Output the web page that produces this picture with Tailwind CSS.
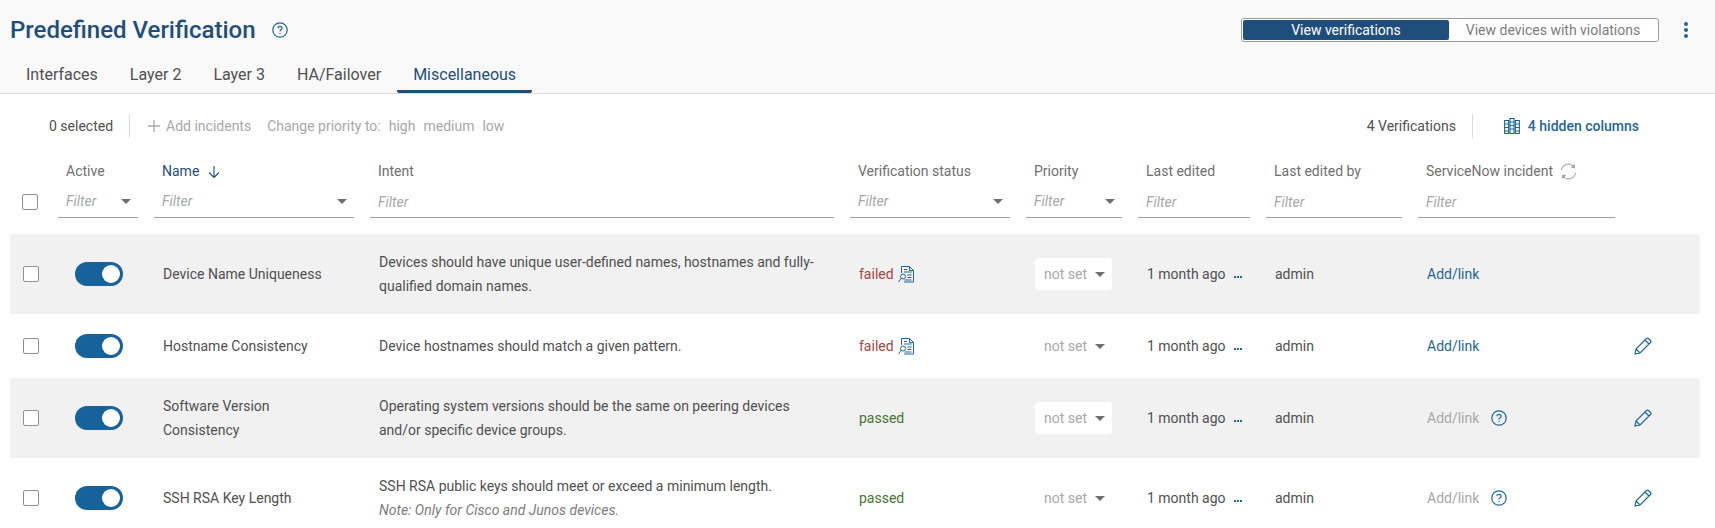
<!DOCTYPE html>
<html lang="en">

<head>
  <meta charset="UTF-8">
  <title>Predefined Verification</title>
  <script src="https://cdn.jsdelivr.net/npm/@tailwindcss/browser@4"></script>
</head>

<body class="w-[1715px] h-[528px] overflow-hidden bg-white font-['Roboto',sans-serif] text-[14px] text-[#505050]">
  <!-- page header + tabs -->
  <div class="h-[94px] bg-[#f9f9f9] border-b border-[#dcdcdc] flex flex-col">
    <div class="h-[60px] flex items-center pl-[10px] pr-[27px]">
      <h1 class="text-[24px] font-medium text-[#1f4e7d] leading-none">Predefined Verification</h1>
      <svg class="ml-[16px] w-[16px] h-[16px] text-[#1f6697]" viewBox="0 0 16 16" fill="none" stroke="currentColor">
        <circle cx="8" cy="8" r="7.2" stroke-width="1.2" />
        <path d="M5.9 6.3c0-1.2.9-2 2.1-2s2.1.8 2.1 1.9c0 1.6-2.1 1.6-2.1 3.2" stroke-width="1.2" />
        <circle cx="8" cy="11.4" r=".7" fill="currentColor" stroke="none" />
      </svg>
      <div class="ml-auto flex items-center">
        <div class="w-[418px] h-[24px] border border-[#9a9a9a] rounded-[3px] bg-white p-[1px] flex text-[14px]">
          <div class="w-[206px] bg-[#1f4e7d] text-white rounded-[2px] flex items-center justify-center">View verifications</div>
          <div class="flex-1 text-[#7c7c7c] flex items-center justify-center">View devices with violations</div>
        </div>
        <div class="ml-[25px] w-[4px] flex flex-col gap-[2px]">
          <span class="w-[4px] h-[4px] rounded-full bg-[#1f6697]"></span>
          <span class="w-[4px] h-[4px] rounded-full bg-[#1f6697]"></span>
          <span class="w-[4px] h-[4px] rounded-full bg-[#1f6697]"></span>
        </div>
      </div>
    </div>
    <div class="flex h-[33px] pl-[10px] text-[16px]">
      <div class="px-[16px] pt-[3px]">Interfaces</div>
      <div class="px-[16px] pt-[3px]">Layer 2</div>
      <div class="px-[16px] pt-[3px]">Layer 3</div>
      <div class="px-[16px] pt-[3px]">HA/Failover</div>
      <div class="px-[16px] pt-[3px] text-[#1f4e7d] border-b-[3px] border-[#1f4e7d] rounded-b-[2px]">Miscellaneous</div>
    </div>
  </div>

  <!-- toolbar -->
  <div class="h-[64px] flex items-center pl-[49px] pr-[76px]">
    <span>0 selected</span>
    <span class="w-px h-[24px] bg-[#dcdcdc] ml-[16px]"></span>
    <svg class="ml-[18px] w-[12px] h-[12px] text-[#a8a8a8]" viewBox="0 0 12 12" stroke="currentColor" stroke-width="1.3">
      <path d="M6 0v12M0 6h12" />
    </svg>
    <span class="ml-[6px] text-[#a8a8a8]">Add incidents</span>
    <span class="ml-[16px] text-[#a8a8a8]">Change priority to:</span>
    <span class="ml-[8px] text-[#a8a8a8]">high</span>
    <span class="ml-[8px] text-[#a8a8a8]">medium</span>
    <span class="ml-[8px] text-[#a8a8a8]">low</span>
    <span class="ml-auto">4 Verifications</span>
    <span class="w-px h-[24px] bg-[#dcdcdc] ml-[16px]"></span>
    <svg class="ml-[31px] w-[16px] h-[16px] text-[#1f6697]" viewBox="0 0 16 16" fill="none" stroke="currentColor" stroke-width="1.1">
      <path d="M.6 2.500h4v13h-4zM6 .5h4v15H6zM11.400 2.500h4v13h-4zM.6 6h4M.6 9.500h4M.6 13h4M6 4h4M6 7.500h4M6 11h4M11.400 6h4M11.400 9.500h4M11.400 13h4" />
    </svg>
    <span class="ml-[8px] font-medium text-[#1f6697]">4 hidden columns</span>
  </div>

  <!-- column headers -->
  <div class="grid grid-cols-[20px_80px_200px_464px_160px_96px_112px_136px_197px_1fr] gap-x-4 ml-[10px] pl-[12px] w-[1690px] mt-[3px]">
    <div></div>
    <div class="pl-[8px] text-[#6f6f6f]">Active</div>
    <div class="pl-[8px] flex items-center text-[#1f4e7d]">Name
      <svg class="ml-[9px] w-[12px] h-[12px]" viewBox="0 0 12 12" fill="none" stroke="currentColor" stroke-width="1.1">
        <path d="M6 0v11M1 6.500l5 5 5-5" />
      </svg>
    </div>
    <div class="pl-[8px] text-[#6f6f6f]">Intent</div>
    <div class="pl-[8px] text-[#6f6f6f]">Verification status</div>
    <div class="pl-[8px] text-[#6f6f6f]">Priority</div>
    <div class="pl-[8px] text-[#6f6f6f]">Last edited</div>
    <div class="pl-[8px] text-[#6f6f6f]">Last edited by</div>
    <div class="pl-[8px] flex items-center text-[#6f6f6f]">ServiceNow incident
      <svg class="ml-[7px] w-[17px] h-[17px] text-[#9a9a9a]" viewBox="0 0 17 17" fill="none" stroke="currentColor">
        <path d="M1.200 7A7.400 7.400 0 0 1 13.800 3.300M15.800 10A7.400 7.400 0 0 1 3.200 13.700" />
        <path d="M14.600 1.500v3.200h-3.200z" fill="currentColor" stroke-width=".6" />
        <path d="M2.400 15.500v-3.200h3.200z" fill="currentColor" stroke-width=".6" />
      </svg>
    </div>
    <div></div>
  </div>

  <!-- filters -->
  <div class="grid grid-cols-[20px_80px_200px_464px_160px_96px_112px_136px_197px_1fr] gap-x-4 ml-[10px] pl-[12px] w-[1690px] h-[32px] mt-[4px] items-end">
    <div class="self-center w-[16px] h-[16px] border border-[#8f8f8f] rounded-[2px] bg-white"></div>
    <div class="h-[32px] border-b border-[#a0a0a0] pl-[8px] pr-[7px] flex items-center justify-between italic text-[#a8a8a8]">Filter
      <span class="w-0 h-0 border-x-[5px] border-x-transparent border-t-[5px] border-t-[#6f6f6f]"></span>
    </div>
    <div class="h-[32px] border-b border-[#a0a0a0] pl-[8px] pr-[7px] flex items-center justify-between italic text-[#a8a8a8]">Filter
      <span class="w-0 h-0 border-x-[5px] border-x-transparent border-t-[5px] border-t-[#6f6f6f]"></span>
    </div>
    <div class="h-[32px] border-b border-[#a0a0a0] pl-[8px] pt-[1px] flex items-center italic text-[#a8a8a8]">Filter</div>
    <div class="h-[32px] border-b border-[#a0a0a0] pl-[8px] pr-[7px] flex items-center justify-between italic text-[#a8a8a8]">Filter
      <span class="w-0 h-0 border-x-[5px] border-x-transparent border-t-[5px] border-t-[#6f6f6f]"></span>
    </div>
    <div class="h-[32px] border-b border-[#a0a0a0] pl-[8px] pr-[7px] flex items-center justify-between italic text-[#a8a8a8]">Filter
      <span class="w-0 h-0 border-x-[5px] border-x-transparent border-t-[5px] border-t-[#6f6f6f]"></span>
    </div>
    <div class="h-[32px] border-b border-[#a0a0a0] pl-[8px] pt-[1px] flex items-center italic text-[#a8a8a8]">Filter</div>
    <div class="h-[32px] border-b border-[#a0a0a0] pl-[8px] pt-[1px] flex items-center italic text-[#a8a8a8]">Filter</div>
    <div class="h-[32px] border-b border-[#a0a0a0] pl-[8px] pt-[1px] flex items-center italic text-[#a8a8a8]">Filter</div>
    <div></div>
  </div>

  <!-- rows -->
  <div class="mt-[16px] ml-[10px] w-[1690px]">
    <div class="h-[80px] bg-[#f1f1f1] rounded-[3px] grid grid-cols-[20px_80px_200px_464px_160px_96px_112px_136px_197px_1fr] gap-x-4 pl-[12px] items-center">
      <div class="ml-[1px] w-[16px] h-[16px] border border-[#8f8f8f] rounded-[2px] bg-white"></div>
      <div class="pl-[17px]"><div class="w-[48px] h-[24px] rounded-full bg-[#17629a] flex items-center justify-end pr-[3px]"><span class="w-[18px] h-[18px] rounded-full bg-white"></span></div></div>
      <div class="pl-[9px]">Device Name Uniqueness</div>
      <div class="pl-[9px] leading-[24px] pr-[10px]">Devices should have unique user-defined names, hostnames and fully-qualified domain names.</div>
      <div class="pl-[9px] flex items-center text-[#a94442]">failed
        <svg class="ml-[4px] w-[17px] h-[17px] text-[#1f6697]" viewBox="0 0 17 17" fill="none" stroke="currentColor">
          <path d="M3.500 7V.5h8l4 4v11.500H6M11.500.5v4h4M6 3.500h3M6 6h7.500M9.500 9h4M9.500 11.500h4M6.500 14h7" />
          <circle cx="5" cy="10.500" r="2.500" /><path d="M3.200 12.300.5 16" />
        </svg>
      </div>
      <div class="pl-[9px]"><div class="w-[77px] h-[32px] bg-white rounded-[3px] flex items-center pl-[9px] text-[#a8a8a8]">not set<span class="ml-[8px] w-0 h-0 border-x-[5px] border-x-transparent border-t-[5px] border-t-[#6f6f6f]"></span></div></div>
      <div class="pl-[9px] flex items-center whitespace-nowrap">1 month ago<span class="ml-[8px] flex gap-[1px] mt-[6px]"><span class="w-[2px] h-[2px] bg-[#1f6697]"></span><span class="w-[2px] h-[2px] bg-[#1f6697]"></span><span class="w-[2px] h-[2px] bg-[#1f6697]"></span></span></div>
      <div class="pl-[9px]">admin</div>
      <div class="pl-[9px] text-[#1f6697]">Add/link</div>
      <div></div>
    </div>
    <div class="h-[64px] grid grid-cols-[20px_80px_200px_464px_160px_96px_112px_136px_197px_1fr] gap-x-4 pl-[12px] items-center">
      <div class="ml-[1px] w-[16px] h-[16px] border border-[#8f8f8f] rounded-[2px] bg-white"></div>
      <div class="pl-[17px]"><div class="w-[48px] h-[24px] rounded-full bg-[#17629a] flex items-center justify-end pr-[3px]"><span class="w-[18px] h-[18px] rounded-full bg-white"></span></div></div>
      <div class="pl-[9px]">Hostname Consistency</div>
      <div class="pl-[9px] leading-[24px] pr-[10px]">Device hostnames should match a given pattern.</div>
      <div class="pl-[9px] flex items-center text-[#a94442]">failed
        <svg class="ml-[4px] w-[17px] h-[17px] text-[#1f6697]" viewBox="0 0 17 17" fill="none" stroke="currentColor">
          <path d="M3.500 7V.5h8l4 4v11.500H6M11.500.5v4h4M6 3.500h3M6 6h7.500M9.500 9h4M9.500 11.500h4M6.500 14h7" />
          <circle cx="5" cy="10.500" r="2.500" /><path d="M3.200 12.300.5 16" />
        </svg>
      </div>
      <div class="pl-[9px]"><div class="w-[77px] h-[32px] rounded-[3px] flex items-center pl-[9px] text-[#a8a8a8]">not set<span class="ml-[8px] w-0 h-0 border-x-[5px] border-x-transparent border-t-[5px] border-t-[#6f6f6f]"></span></div></div>
      <div class="pl-[9px] flex items-center whitespace-nowrap">1 month ago<span class="ml-[8px] flex gap-[1px] mt-[6px]"><span class="w-[2px] h-[2px] bg-[#1f6697]"></span><span class="w-[2px] h-[2px] bg-[#1f6697]"></span><span class="w-[2px] h-[2px] bg-[#1f6697]"></span></span></div>
      <div class="pl-[9px]">admin</div>
      <div class="pl-[9px] text-[#1f6697]">Add/link</div>
      <svg class="ml-[3px] w-[18px] h-[18px] text-[#1f6697]" viewBox="0 0 18 18" fill="none" stroke="currentColor" stroke-width="1.2">
        <path d="M1 17l1-5L12.500 1.500a1.500 1.500 0 0 1 2 0l2 2a1.500 1.500 0 0 1 0 2L6 16zM2.500 12.500l3 3M11 3l4 4" />
      </svg>
    </div>
    <div class="h-[80px] bg-[#f1f1f1] rounded-[3px] grid grid-cols-[20px_80px_200px_464px_160px_96px_112px_136px_197px_1fr] gap-x-4 pl-[12px] items-center">
      <div class="ml-[1px] w-[16px] h-[16px] border border-[#8f8f8f] rounded-[2px] bg-white"></div>
      <div class="pl-[17px]"><div class="w-[48px] h-[24px] rounded-full bg-[#17629a] flex items-center justify-end pr-[3px]"><span class="w-[18px] h-[18px] rounded-full bg-white"></span></div></div>
      <div class="pl-[9px] pr-[60px] leading-[24px]">Software Version Consistency</div>
      <div class="pl-[9px] leading-[24px] pr-[10px]">Operating system versions should be the same on peering devices and/or specific device groups.</div>
      <div class="pl-[9px] text-[#47752f]">passed</div>
      <div class="pl-[9px]"><div class="w-[77px] h-[32px] bg-white rounded-[3px] flex items-center pl-[9px] text-[#a8a8a8]">not set<span class="ml-[8px] w-0 h-0 border-x-[5px] border-x-transparent border-t-[5px] border-t-[#6f6f6f]"></span></div></div>
      <div class="pl-[9px] flex items-center whitespace-nowrap">1 month ago<span class="ml-[8px] flex gap-[1px] mt-[6px]"><span class="w-[2px] h-[2px] bg-[#1f6697]"></span><span class="w-[2px] h-[2px] bg-[#1f6697]"></span><span class="w-[2px] h-[2px] bg-[#1f6697]"></span></span></div>
      <div class="pl-[9px]">admin</div>
      <div class="pl-[9px] flex items-center text-[#a8a8a8]">Add/link
        <svg class="ml-[12px] w-[16px] h-[16px] text-[#1f6697]" viewBox="0 0 16 16" fill="none" stroke="currentColor">
          <circle cx="8" cy="8" r="7.200" stroke-width="1.200" />
          <path d="M5.900 6.300c0-1.200.9-2 2.100-2s2.100.8 2.100 1.900c0 1.600-2.100 1.600-2.100 3.200" stroke-width="1.200" />
          <circle cx="8" cy="11.400" r=".7" fill="currentColor" stroke="none" />
        </svg>
      </div>
      <svg class="ml-[3px] w-[18px] h-[18px] text-[#1f6697]" viewBox="0 0 18 18" fill="none" stroke="currentColor" stroke-width="1.2">
        <path d="M1 17l1-5L12.500 1.500a1.500 1.500 0 0 1 2 0l2 2a1.500 1.500 0 0 1 0 2L6 16zM2.500 12.500l3 3M11 3l4 4" />
      </svg>
    </div>
    <div class="h-[80px] grid grid-cols-[20px_80px_200px_464px_160px_96px_112px_136px_197px_1fr] gap-x-4 pl-[12px] items-center">
      <div class="ml-[1px] w-[16px] h-[16px] border border-[#8f8f8f] rounded-[2px] bg-white"></div>
      <div class="pl-[17px]"><div class="w-[48px] h-[24px] rounded-full bg-[#17629a] flex items-center justify-end pr-[3px]"><span class="w-[18px] h-[18px] rounded-full bg-white"></span></div></div>
      <div class="pl-[9px]">SSH RSA Key Length</div>
      <div class="pl-[9px] leading-[24px] pr-[10px]">SSH RSA public keys should meet or exceed a minimum length.<div class="italic text-[#7c7c7c]">Note: Only for Cisco and Junos devices.</div></div>
      <div class="pl-[9px] text-[#47752f]">passed</div>
      <div class="pl-[9px]"><div class="w-[77px] h-[32px] rounded-[3px] flex items-center pl-[9px] text-[#a8a8a8]">not set<span class="ml-[8px] w-0 h-0 border-x-[5px] border-x-transparent border-t-[5px] border-t-[#6f6f6f]"></span></div></div>
      <div class="pl-[9px] flex items-center whitespace-nowrap">1 month ago<span class="ml-[8px] flex gap-[1px] mt-[6px]"><span class="w-[2px] h-[2px] bg-[#1f6697]"></span><span class="w-[2px] h-[2px] bg-[#1f6697]"></span><span class="w-[2px] h-[2px] bg-[#1f6697]"></span></span></div>
      <div class="pl-[9px]">admin</div>
      <div class="pl-[9px] flex items-center text-[#a8a8a8]">Add/link
        <svg class="ml-[12px] w-[16px] h-[16px] text-[#1f6697]" viewBox="0 0 16 16" fill="none" stroke="currentColor">
          <circle cx="8" cy="8" r="7.200" stroke-width="1.200" />
          <path d="M5.900 6.300c0-1.200.9-2 2.100-2s2.100.8 2.100 1.900c0 1.600-2.100 1.600-2.100 3.200" stroke-width="1.200" />
          <circle cx="8" cy="11.400" r=".7" fill="currentColor" stroke="none" />
        </svg>
      </div>
      <svg class="ml-[3px] w-[18px] h-[18px] text-[#1f6697]" viewBox="0 0 18 18" fill="none" stroke="currentColor" stroke-width="1.2">
        <path d="M1 17l1-5L12.500 1.500a1.500 1.500 0 0 1 2 0l2 2a1.500 1.500 0 0 1 0 2L6 16zM2.500 12.500l3 3M11 3l4 4" />
      </svg>
    </div>
  </div>
</body>

</html>
